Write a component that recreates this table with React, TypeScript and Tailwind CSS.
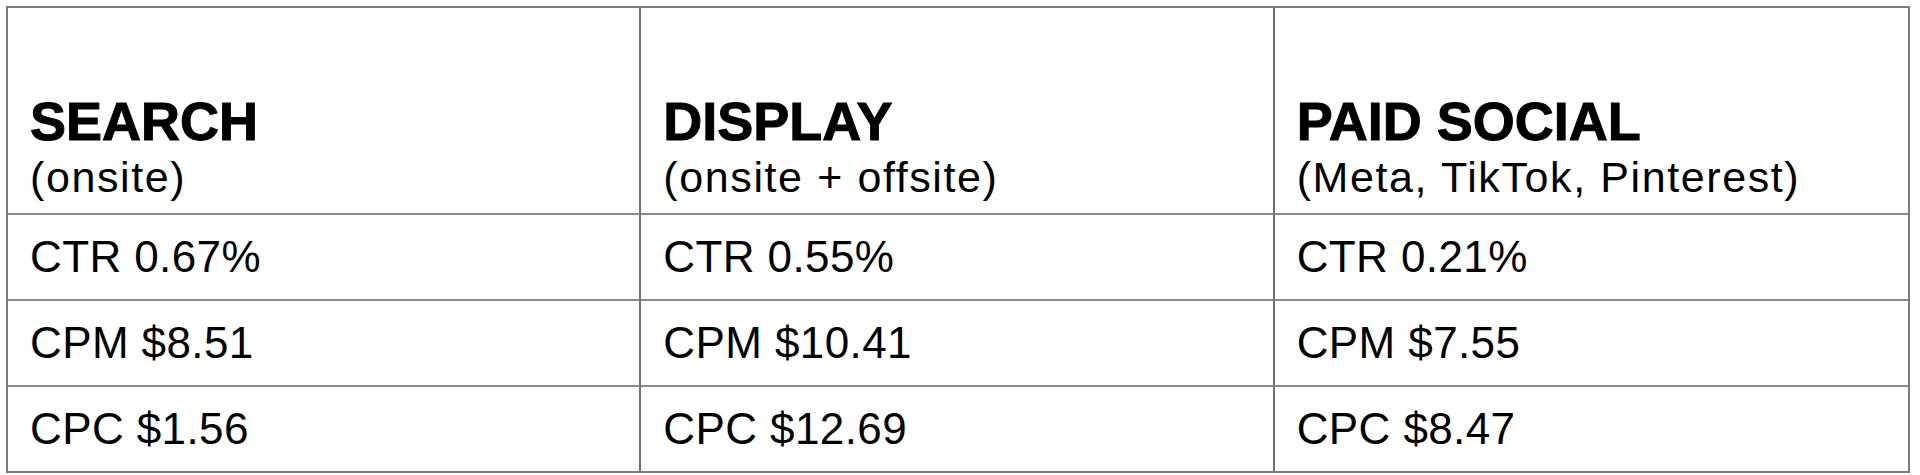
const columns = [
  {
    title: 'SEARCH',
    sub: '(onsite)',
    rows: ['CTR 0.67%', 'CPM $8.51', 'CPC $1.56'],
  },
  {
    title: 'DISPLAY',
    sub: '(onsite + offsite)',
    rows: ['CTR 0.55%', 'CPM $10.41', 'CPC $12.69'],
  },
  {
    title: 'PAID SOCIAL',
    sub: '(Meta, TikTok, Pinterest)',
    rows: ['CTR 0.21%', 'CPM $7.55', 'CPC $8.47'],
  },
];

const rowHeights = ['h-[86px]', 'h-[86px]', 'h-[84px]'];

export default function App() {
  return (
    <div className="w-[1920px] h-[475px] bg-white pt-[6px] pl-[6px] font-['Liberation_Sans',Arial,sans-serif] text-black">
      <div className="w-[1904px] grid grid-cols-3 border-2 border-[#7a7a7a]">
        {/* Header row */}
        {columns.map((col, i) => (
          <div
            key={col.title}
            className={
              'h-[207px] flex flex-col justify-end pl-[22px] pb-[10px] border-b-2 border-[#8a8a8a]' +
              (i < 2 ? ' border-r-2 border-r-[#6f6f6f]' : '')
            }
          >
            <div className="text-[54px] leading-[60px] font-bold [-webkit-text-stroke:1px_black]">
              {col.title}
            </div>
            <div className="text-[43px] leading-[52px] tracking-[1.6px]">{col.sub}</div>
          </div>
        ))}

        {/* Metric rows */}
        {[0, 1, 2].map((r) =>
          columns.map((col, i) => (
            <div
              key={col.title + r}
              className={
                rowHeights[r] +
                ' flex items-center pl-[22px] text-[44px] tracking-[0.4px]' +
                (r < 2 ? ' border-b-2 border-[#8a8a8a]' : '') +
                (i < 2 ? ' border-r-2 border-r-[#6f6f6f]' : '')
              }
            >
              {col.rows[r]}
            </div>
          ))
        )}
      </div>
    </div>
  );
}
